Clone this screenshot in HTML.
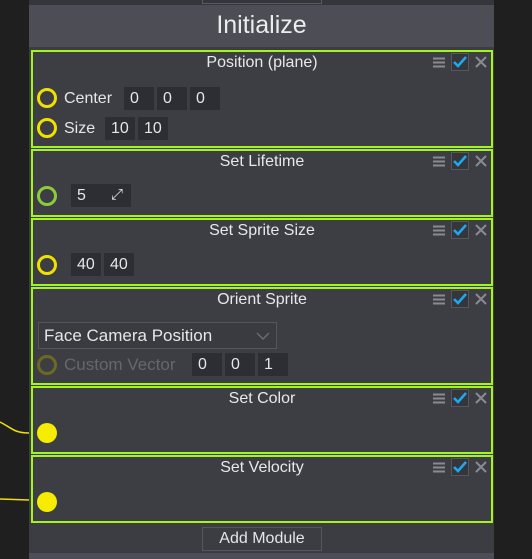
<!DOCTYPE html>
<html><head><style>
*{margin:0;padding:0;box-sizing:border-box}
body{width:532px;height:559px;background:#1f1f1f;position:relative;overflow:hidden;font-family:"Liberation Sans",sans-serif;color:#e6e6e6}
.a{position:absolute}
.panel{left:29px;top:0;width:465px;height:559px;background:#3c3d43}
.mod{position:absolute;left:31px;width:462px;border:2px solid #a4f51c;background:#3d3e44}
.t{position:absolute;left:0;right:0;top:2px;text-align:center;font-size:16px;color:#e8e8e8}
.f{position:absolute;background:#2d2e33;height:23px;font-size:16px;line-height:23px;padding-left:6px;color:#e6e6e6}
.lb{position:absolute;font-size:16px;line-height:23px}
.ring{position:absolute;width:20px;height:20px;border-radius:50%;border:3px solid #f0e000}
.dot{position:absolute;width:20px;height:20px;border-radius:50%;background:#f5ec00}
</style></head><body>
<div class="a panel"></div>
<div class="a" style="left:29px;top:0;width:465px;height:5px;background:#35363b"></div>
<div class="a" style="left:202px;top:-2px;width:120px;height:6px;border:1px solid #5a5b60"></div>
<div class="a" style="left:29px;top:5px;width:465px;height:42px;background:#4d4e55"></div>
<div class="a" style="left:29px;top:11px;width:465px;text-align:center;font-size:25px;color:#ececec">Initialize</div>

<svg width="0" height="0" style="position:absolute"><defs>
<g id="icons">
<path d="M0 2.5h12M0 6.5h12M0 10.5h12" stroke="#8a8b90" stroke-width="2"/>
<rect x="18.5" y="-2.5" width="17" height="17" fill="#35363b" stroke="#56575c"/>
<path d="M21 6l4 4 8-9" stroke="#1fa8f0" stroke-width="2.5" fill="none"/>
<path d="M43 1l10 10M53 1l-10 10" stroke="#8a8b90" stroke-width="2"/>
</g></defs></svg>

<div class="mod" style="top:50px;height:98px">
<div class="t">Position (plane)</div>
<svg class="a" style="left:400px;top:1px" width="60" height="20"><g transform="translate(0,3)"><use href="#icons"/></g></svg>
<div class="ring" style="left:4px;top:36px"></div>
<div class="lb" style="left:31px;top:35px">Center</div>
<div class="f" style="left:91px;top:35px;width:30px">0</div>
<div class="f" style="left:124px;top:35px;width:30px">0</div>
<div class="f" style="left:157px;top:35px;width:30px">0</div>
<div class="ring" style="left:4px;top:66px"></div>
<div class="lb" style="left:31px;top:65px">Size</div>
<div class="f" style="left:72px;top:65px;width:30px">10</div>
<div class="f" style="left:105px;top:65px;width:30px">10</div>
</div>

<div class="mod" style="top:149px;height:68px">
<div class="t">Set Lifetime</div>
<svg class="a" style="left:400px;top:1px" width="60" height="20"><g transform="translate(0,3)"><use href="#icons"/></g></svg>
<div class="ring" style="left:4px;top:35px;border-color:#8ccc3c"></div>
<div class="f" style="left:38px;top:33px;width:60px">5<span style="position:absolute;right:8px;top:-1px;font-size:15px">⤢</span></div>
</div>

<div class="mod" style="top:218px;height:68px">
<div class="t">Set Sprite Size</div>
<svg class="a" style="left:400px;top:1px" width="60" height="20"><g transform="translate(0,3)"><use href="#icons"/></g></svg>
<div class="ring" style="left:4px;top:35px"></div>
<div class="f" style="left:38px;top:33px;width:30px">40</div>
<div class="f" style="left:71px;top:33px;width:30px">40</div>
</div>

<div class="mod" style="top:287px;height:98px">
<div class="t">Orient Sprite</div>
<svg class="a" style="left:400px;top:1px" width="60" height="20"><g transform="translate(0,3)"><use href="#icons"/></g></svg>
<div class="a" style="left:5px;top:33px;width:239px;height:27px;border:1px solid #55565b;background:#3a3b41;font-size:17px;line-height:25px;padding-left:5px">Face Camera Position<svg class="a" style="right:6px;top:8px" width="14" height="10"><path d="M1 2l6 6 6-6" stroke="#6a6b70" fill="none" stroke-width="1.5"/></svg></div>
<div class="ring" style="left:4px;top:66px;border-color:#6e6824"></div>
<div class="lb" style="left:31px;top:64px;color:#66676c;font-size:17px">Custom Vector</div>
<div class="f" style="left:159px;top:64px;width:30px">0</div>
<div class="f" style="left:192px;top:64px;width:30px">0</div>
<div class="f" style="left:225px;top:64px;width:30px">1</div>
</div>

<div class="mod" style="top:386px;height:68px">
<div class="t">Set Color</div>
<svg class="a" style="left:400px;top:1px" width="60" height="20"><g transform="translate(0,3)"><use href="#icons"/></g></svg>
<div class="dot" style="left:4px;top:35px"></div>
</div>

<div class="mod" style="top:455px;height:68px">
<div class="t">Set Velocity</div>
<svg class="a" style="left:400px;top:1px" width="60" height="20"><g transform="translate(0,3)"><use href="#icons"/></g></svg>
<div class="dot" style="left:4px;top:35px"></div>
</div>

<svg class="a" style="left:0;top:400px" width="32" height="110"><path d="M0 22C12 28 14 33 29 33M0 99L29 100" stroke="#f0e000" stroke-width="1.5" fill="none"/></svg>

<div class="a" style="left:202px;top:527px;width:120px;height:24px;border:1px solid #56575c;text-align:center;font-size:16px;line-height:22px">Add Module</div>
<div class="a" style="left:29px;top:553px;width:465px;height:6px;background:#4d4e55"></div>
</body></html>
